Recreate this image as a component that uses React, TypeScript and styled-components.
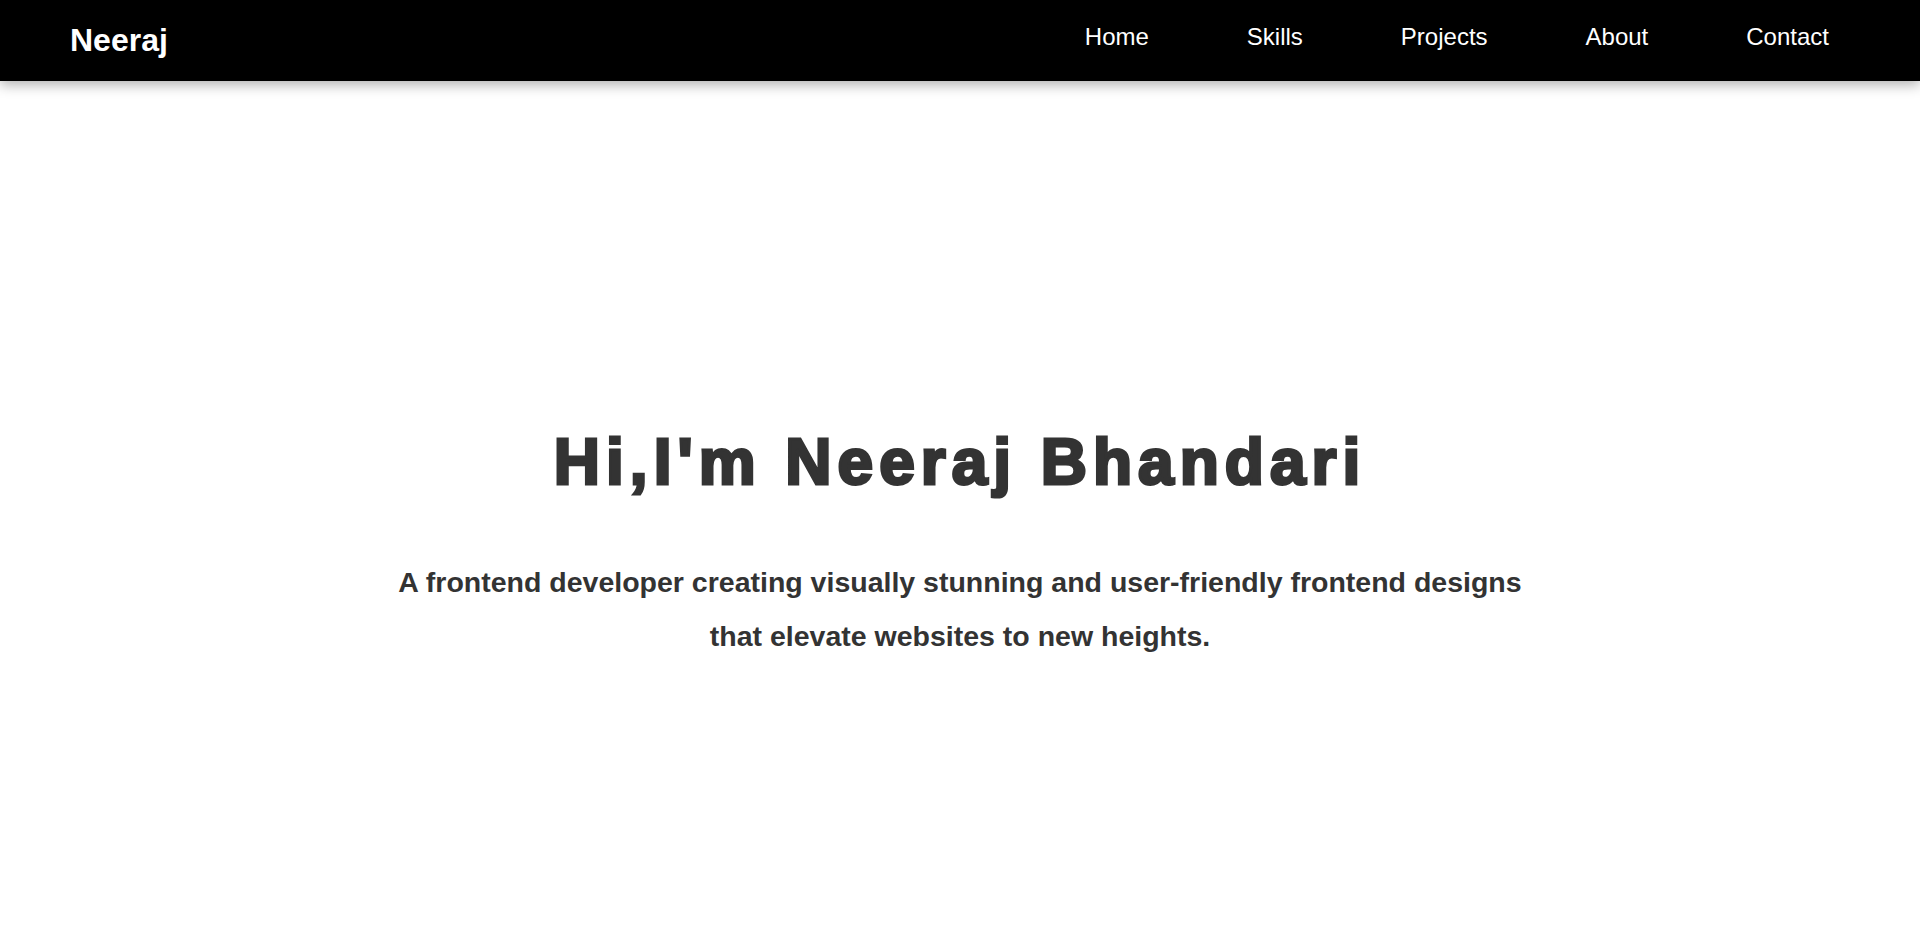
import React from "react";
import styled, { createGlobalStyle } from "styled-components";

const GlobalStyle = createGlobalStyle`
  * { box-sizing: border-box; }
  html, body { margin: 0; padding: 0; background: #ffffff; }
  body { font-family: "Liberation Sans", Arial, Helvetica, sans-serif; }
`;

const NavBar = styled.nav`
  height: 81px;
  background: #000000;
  display: flex;
  align-items: center;
  justify-content: space-between;
  padding: 0 91px 0 70px;
  box-shadow: 0 4px 12px rgba(0, 0, 0, 0.3);
  position: relative;
  z-index: 1;
`;

const Logo = styled.div`
  color: #ffffff;
  font-size: 32px;
  font-weight: 700;
`;

const NavList = styled.ul`
  list-style: none;
  display: flex;
  gap: 98px;
  margin: 0 0 7px 0;
  padding: 0;
`;

const NavLink = styled.a`
  color: #ffffff;
  font-size: 24px;
  text-decoration: none;
`;

const Hero = styled.section`
  min-height: 925px;
  display: flex;
  flex-direction: column;
  align-items: center;
  justify-content: center;
  text-align: center;
`;

const Title = styled.h1`
  margin: 0 0 55px 0;
  font-size: 64px;
  line-height: 1.2;
  font-weight: 900;
  letter-spacing: 6px;
  color: #333333;
  -webkit-text-stroke: 3px #333333;
`;

const Subtitle = styled.p`
  margin: 0;
  max-width: 1150px;
  font-size: 28.5px;
  line-height: 54px;
  font-weight: 700;
  color: #333333;
`;

const links = ["Home", "Skills", "Projects", "About", "Contact"];

export default function App() {
  return (
    <>
      <GlobalStyle />
      <NavBar>
        <Logo>Neeraj</Logo>
        <NavList>
          {links.map((l) => (
            <li key={l}>
              <NavLink href={`#${l.toLowerCase()}`}>{l}</NavLink>
            </li>
          ))}
        </NavList>
      </NavBar>
      <Hero>
        <Title>Hi,I'm Neeraj Bhandari</Title>
        <Subtitle>
          A frontend developer creating visually stunning and user-friendly frontend designs that elevate websites to new heights.
        </Subtitle>
      </Hero>
    </>
  );
}
